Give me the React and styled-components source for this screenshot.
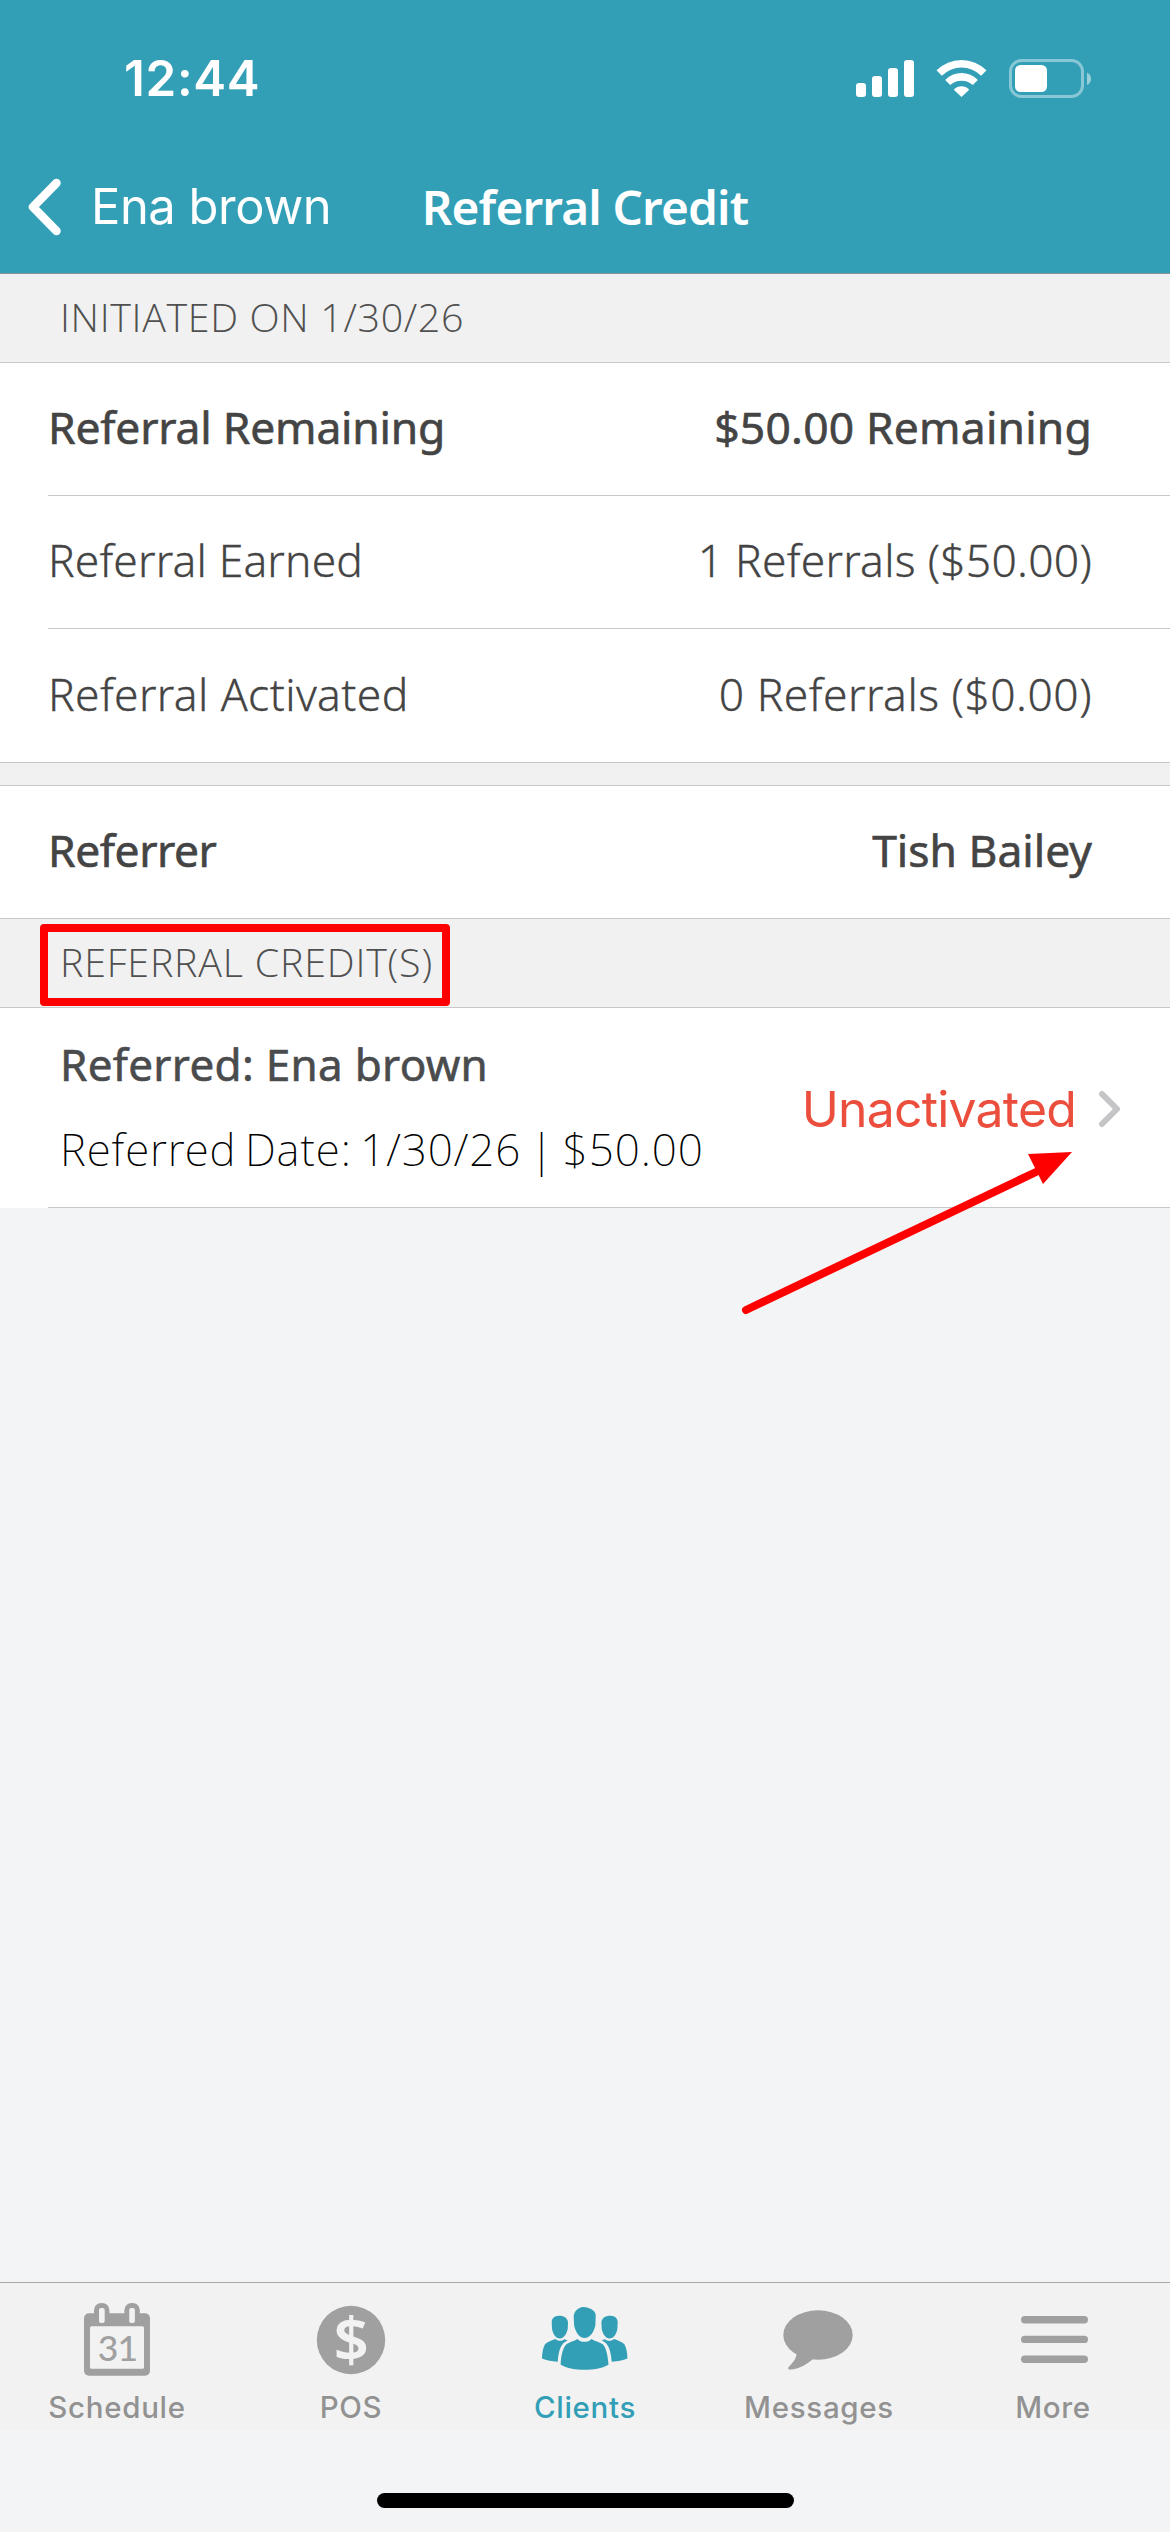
import React from 'react';
import styled, { createGlobalStyle } from 'styled-components';

const teal = "#329fb7";
const line = "#c8c8c8";
const iconGray = "#a0a0a0";

const GlobalStyle = createGlobalStyle`
  body {
    margin: 0;
    background: #f3f4f6;
  }
  * {
    box-sizing: border-box;
  }
`

const Screen = styled.div`
  display: flex;
  flex-direction: column;
  width: 1170px;
  height: 2532px;
  overflow: hidden;
  background: #f3f4f6;
  color: #444444;
  font-family: "Noto Sans", "Open Sans", sans-serif;
`

const Header = styled.header`
  height: 274px;
  background: ${teal};
  border-bottom: 1px solid #8b9496;
  color: white;
`

const StatusBar = styled.div`
  display: flex;
  align-items: center;
  justify-content: space-between;
  height: 141px;
  padding: 15px 79px 0 124px;
`

const Time = styled.span`
  font-family: Inter, sans-serif;
  font-size: 49.3px;
  font-weight: 600;
  letter-spacing: 0.69px;
`

const StatusIcons = styled.div`
  display: flex;
  align-items: center;
  gap: 22px;
  svg {
    display: block;
  }
`

const NavBar = styled.nav`
  display: grid;
  grid-template-columns: 1fr auto 1fr;
  align-items: center;
  height: 132px;
`

const BackButton = styled.div`
  display: flex;
  align-items: center;
  gap: 30px;
  padding-left: 27px;
  font-family: Inter, sans-serif;
  font-size: 48.9px;
  line-height: 60px;
  letter-spacing: -0.47px;
  white-space: nowrap;
`

const Title = styled.h1`
  margin: 0;
  font-size: 47.7px;
  line-height: 64px;
  font-weight: 600;
  letter-spacing: -0.84px;
  white-space: nowrap;
`

const SectionHeader = styled.div`
  position: relative;
  display: flex;
  align-items: center;
  height: 89px;
  padding: 0 60px 2px;
  background: #f1f1f1;
  border-bottom: 1px solid ${line};
  color: #505050;
  font-family: "Open Sans", sans-serif;
  font-size: 39.4px;
  font-weight: 300;
  letter-spacing: ${p => p.$track}px;
  white-space: nowrap;
`

const List = styled.div`
  background: white;
  border-bottom: 1px solid ${line};
`

const Row = styled.div`
  display: flex;
  align-items: center;
  justify-content: space-between;
  height: ${p => p.$single ? 132 : 133}px;
  margin-left: 48px;
  padding: 0 78px 4px 0;
  border-bottom: 1px solid ${line};
  font-size: 44.4px;
  font-weight: ${p => p.$strong ? 400 : 300};
  -webkit-text-stroke: ${p => p.$strong ? 0.6 : 0.3}px currentColor;
  white-space: nowrap;
  &:last-child {
    border-bottom: none;
  }
`

const RowText = styled.span`
  letter-spacing: ${p => p.$track}px;
`

const Spacer = styled.div`
  height: 23px;
  background: #f1f1f1;
  border-bottom: 1px solid ${line};
`

const Credit = styled.div`
  position: relative;
  display: flex;
  justify-content: space-between;
  height: 200px;
  padding: 26px 48px 0 60px;
  background: white;
  &::after {
    content: "";
    position: absolute;
    left: 48px;
    right: 0;
    bottom: 0;
    height: 1px;
    background: ${line};
  }
`

const CreditInfo = styled.div`
  display: flex;
  flex-direction: column;
  gap: 25px;
  font-size: 44px;
  line-height: 60px;
  white-space: nowrap;
`

const CreditName = styled.div`
  font-weight: 400;
  -webkit-text-stroke: 0.6px currentColor;
  color: #4a4b4d;
  letter-spacing: 0.3px;
`

const CreditDate = styled.div`
  font-weight: 200;
  color: black;
  letter-spacing: 0.9px;
  word-spacing: -3.8px;
`

const CreditStatus = styled.div`
  display: flex;
  align-items: center;
  gap: 22px;
  height: 150px;
  color: #eb4e3d;
  font-family: Inter, sans-serif;
  font-size: 49.9px;
  letter-spacing: -0.77px;
`

/* red markup drawn over the screen */
const Highlight = styled.div`
  position: absolute;
  left: 40px;
  top: 5px;
  width: 410px;
  height: 82px;
  border: 8px solid #ff0000;
  border-radius: 4px;
`

const Arrow = styled.svg`
  position: absolute;
  left: 730px;
  top: 132px;
  z-index: 1;
`

const Content = styled.main`
  flex: 1;
`

const TabBar = styled.footer`
  display: grid;
  grid-template-columns: repeat(5, 1fr);
  height: 148px;
  padding-top: 17px;
  background: #f2f2f2;
  border-top: 1px solid #a9a9a9;
`

const Tab = styled.div`
  display: flex;
  flex-direction: column;
  align-items: center;
  gap: 9px;
  color: ${p => p.$active ? teal : "#929292"};
  font-family: Inter, sans-serif;
  font-size: 29.5px;
  line-height: 36px;
  font-weight: 500;
  letter-spacing: 0.7px;
`

const TabIcon = styled.svg`
  display: block;
  width: 100px;
  height: 80px;
  overflow: visible;
  fill: ${p => p.$active ? teal : iconGray};
`

const HomeArea = styled.div`
  display: flex;
  justify-content: center;
  height: 102px;
  padding-top: 63px;
`

const HomeBar = styled.div`
  width: 417px;
  height: 15px;
  border-radius: 8px;
  background: black;
`

const Signal = () => (
  <svg width="58" height="37" fill="white">
    <rect x="0" y="23" width="10" height="14" rx="3" />
    <rect x="16" y="16" width="10" height="21" rx="3" />
    <rect x="32" y="8" width="10" height="29" rx="3" />
    <rect x="48" y="0" width="10" height="37" rx="3" />
  </svg>
)

const Wifi = () => (
  <svg width="51" height="37" fill="white">
    <path d="M.5 10.3 A35.5 35.5 0 0 1 50.5 10.3 L45.2 15.7 A28 28 0 0 0 5.8 15.7 Z" />
    <path d="M9.2 20 A22.5 22.5 0 0 1 41.8 20 L36.8 25 A17 17 0 0 0 14.2 25 Z" />
    <path d="M17.8 29.7 A10.5 10.5 0 0 1 33.2 29.7 L25.5 37 Z" />
  </svg>
)

const Battery = () => (
  <svg width="82" height="39">
    <rect x="1.5" y="1.5" width="72" height="36" rx="11" fill="none" stroke="white" strokeOpacity="0.42" strokeWidth="3" />
    <rect x="6" y="6" width="32" height="27" rx="5.5" fill="white" />
    <path d="M78 13.5 Q82 15.5 82 19.7 Q82 24 78 26 Z" fill="white" fillOpacity="0.5" />
  </svg>
)

const ScheduleIcon = () => (
  <TabIcon viewBox="0 0 100 80">
    <rect x="17" y="13.3" width="66" height="62.5" rx="5" />
    <rect x="27" y="3" width="15.4" height="26" rx="7.2" />
    <rect x="57.4" y="3" width="15.4" height="26" rx="7.2" />
    <rect x="32" y="8" width="5.7" height="15" rx="2" fill="#f2f2f2" />
    <rect x="62.2" y="8" width="5.7" height="15" rx="2" fill="#f2f2f2" />
    <rect x="23" y="26.2" width="54" height="42.6" rx="1.5" fill="#f2f2f2" />
    <text x="50.5" y="60.5" textAnchor="middle" fontFamily="Lato" fontSize="35.5" fontWeight="500" letterSpacing="-0.8">31</text>
  </TabIcon>
)

const PosIcon = () => (
  <TabIcon viewBox="0 0 100 80">
    <circle cx="50" cy="40" r="34.2" />
    <text x="50.5" y="62" textAnchor="middle" fontFamily="Noto Sans" fontSize="62" fontWeight="600" fill="#f2f2f2">$</text>
  </TabIcon>
)

const ClientsIcon = () => {
  const side = (
    <>
      <path d="M23 15.7 C28 15.5 32.5 18 32.3 23 L32 29 C31 34 28 38.4 24.2 38.4 C20 38.4 17 34 16.3 28.5 L16 22 C16 18.5 19 15.8 23 15.7 Z" />
      <path d="M19.7 39 C22 41.3 26 41.4 28.6 39.2 L32 40.2 C25 43.5 23 50 22 61.7 C16 61.5 11 60.5 6.3 58.6 C6.3 53 7.3 48 9.3 44.2 C12 41.8 16 40.5 19.7 39 Z" />
    </>
  )
  return (
    <TabIcon $active viewBox="0 0 100 80">
      <g transform="translate(0.7 0)">
        {side}
        <g transform="translate(98 0) scale(-1 1)">{side}</g>
        <path d="M47.6 7 C50.5 6.6 60 9.5 60 15 L59.7 25 C58.5 32 54 38.1 48.9 38.1 C43.5 38.1 39.5 31.5 38.4 25 L38 15.5 C38.5 12 42 7.3 47.6 7 Z" />
        <path d="M41.7 39 C45 42.8 52.5 42.8 55.8 39 C59 41.4 63.5 41.8 67 44.2 C71 47.5 72.5 59 72.8 64.8 C66 68.6 57.5 69.8 48.9 69.8 C40 69.8 32 68.6 25 64.8 C25 59 26.5 48 30.7 44.2 C34 41.8 38.5 41.4 41.7 39 Z" />
      </g>
    </TabIcon>
  )
}

const MessagesIcon = () => (
  <TabIcon viewBox="0 0 100 80">
    <ellipse cx="49" cy="35" rx="34.7" ry="24.7" />
    <path d="M27.7 53 C27.5 59 23 63.5 19.6 67 C18.6 68.6 19.5 69.8 21.2 69.6 C30 69 37.5 64.5 43.7 59.3 Z" />
  </TabIcon>
)

const MoreIcon = () => (
  <TabIcon viewBox="0 0 100 80">
    <rect x="18" y="16" width="67" height="7.4" rx="3.7" />
    <rect x="18" y="35.7" width="67" height="7.4" rx="3.7" />
    <rect x="18" y="55.6" width="67" height="7.4" rx="3.7" />
  </TabIcon>
)

const summary = [
  { label: "Referral Remaining", track: -0.2, value: "$50.00 Remaining", valueTrack: 0.2, strong: true },
  { label: "Referral Earned", track: 0.17, value: "1 Referrals ($50.00)", valueTrack: 0.26 },
  { label: "Referral Activated", track: 0.4, value: "0 Referrals ($0.00)", valueTrack: 0.5 },
]

const tabs = [
  { name: "Schedule", Icon: ScheduleIcon },
  { name: "POS", Icon: PosIcon },
  { name: "Clients", Icon: ClientsIcon, active: true },
  { name: "Messages", Icon: MessagesIcon },
  { name: "More", Icon: MoreIcon },
]

const App = () => {
  const summaryRows = summary.map(row =>
    <Row key={row.label} $strong={row.strong}>
      <RowText $track={row.track}>{row.label}</RowText>
      <RowText $track={row.valueTrack}>{row.value}</RowText>
    </Row>);

  return (
    <Screen>
      <GlobalStyle />
      <Header>
        <StatusBar>
          <Time>12:44</Time>
          <StatusIcons>
            <Signal />
            <Wifi />
            <Battery />
          </StatusIcons>
        </StatusBar>
        <NavBar>
          <BackButton>
            <svg width="34" height="58" fill="none" stroke="white" strokeWidth="8.5" strokeLinecap="round" strokeLinejoin="round">
              <path d="M29.5 5 L6 29 L29.5 53" />
            </svg>
            Ena brown
          </BackButton>
          <Title>Referral Credit</Title>
        </NavBar>
      </Header>

      <Content>
        <SectionHeader $track={0.66}>INITIATED ON 1/30/26</SectionHeader>
        <List>{summaryRows}</List>
        <Spacer />
        <List>
          <Row $strong $single>
            <RowText $track={-0.45}>Referrer</RowText>
            <RowText $track={0}>Tish Bailey</RowText>
          </Row>
        </List>
        <SectionHeader $track={0.8}>
          REFERRAL CREDIT(S)
          <Highlight />
        </SectionHeader>
        <Credit>
          <CreditInfo>
            <CreditName>Referred: Ena brown</CreditName>
            <CreditDate>Referred Date: 1/30/26 | $50.00</CreditDate>
          </CreditInfo>
          <CreditStatus>
            Unactivated
            <svg width="24" height="38" fill="none" stroke="#c5c5c7" strokeWidth="6" strokeLinecap="round" strokeLinejoin="round">
              <path d="M4 4 L19 19 L4 34" />
            </svg>
          </CreditStatus>
          <Arrow width="360" height="190">
            <path d="M16 170 L306 32" stroke="#ff0000" strokeWidth="8" strokeLinecap="round" />
            <path d="M298 14 L342 12 L313 44 Z" fill="#ff0000" />
          </Arrow>
        </Credit>
      </Content>

      <TabBar>
        {tabs.map(({ name, Icon, active }) =>
          <Tab key={name} $active={active}>
            <Icon />
            {name}
          </Tab>)}
      </TabBar>
      <HomeArea>
        <HomeBar />
      </HomeArea>
    </Screen>
  );
}

export default App;
